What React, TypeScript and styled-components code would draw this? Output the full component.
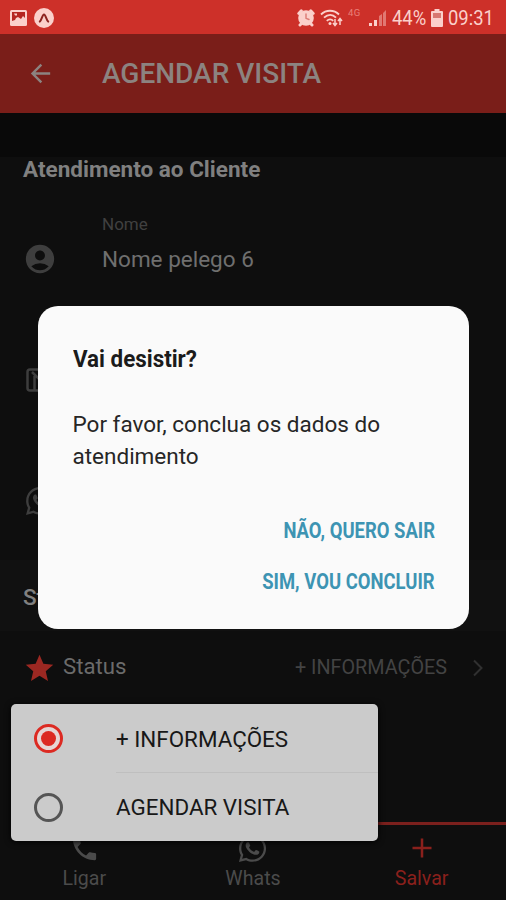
import React from 'react';
import styled, { createGlobalStyle } from 'styled-components';
import { MdAccountCircle, MdArrowBack, MdPhone, MdStar } from 'react-icons/md';
import { FaWhatsapp } from 'react-icons/fa';

const GlobalStyle = createGlobalStyle`
  *, *::before, *::after { box-sizing: border-box; }
  html, body { margin: 0; padding: 0; background: #0e0e0e; }
  svg { display: block; flex: none; }
`;

const Screen = styled.div`
  position: relative;
  display: flex;
  flex-direction: column;
  width: 506px;
  height: 900px;
  overflow: hidden;
  background: #0e0e0e;
  font-family: Roboto, 'Liberation Sans', sans-serif;
`;

const StatusBar = styled.div`
  flex: none;
  display: flex;
  align-items: center;
  justify-content: space-between;
  height: 34px;
  padding: 1px 13px 0 9px;
  background: #cd3029;
  color: #fbd0cb;
`;

const StatusGroup = styled.div<{ $gap: number }>`
  display: flex;
  align-items: center;
  gap: ${(p) => p.$gap}px;
`;

const StatusText = styled.span<{ $width: number }>`
  width: ${(p) => p.$width}px;
  font-size: 20.5px;
  line-height: 24px;
  white-space: nowrap;
  transform: scaleX(0.9);
  transform-origin: left center;
`;

const NetworkLabel = styled.span`
  align-self: flex-start;
  width: 16px;
  font-size: 9.5px;
  line-height: 14px;
  letter-spacing: 0.5px;
  color: #ea8078;
`;

const Header = styled.header`
  flex: none;
  display: flex;
  align-items: center;
  gap: 47px;
  height: 79px;
  padding: 0 26px;
  background: #7a1e19;
  color: #8c8380;
`;

const HeaderTitle = styled.h1`
  margin: 0;
  font-size: 28px;
  font-weight: 500;
  line-height: 36px;
`;

const Spacer = styled.div`
  flex: none;
  height: 44px;
  background: #090909;
`;

const SectionTitle = styled.h2<{ $height: number; $pad: number; $band?: boolean }>`
  flex: none;
  height: ${(p) => p.$height}px;
  margin: 0;
  padding: ${(p) => p.$pad}px 23px 0;
  background: ${(p) => (p.$band ? '#111111' : 'transparent')};
  color: #808080;
  font-size: 22.5px;
  font-weight: ${(p) => (p.$band ? 500 : 700)};
  line-height: 24px;
`;

const Field = styled.div`
  flex: none;
  display: flex;
  gap: 47px;
  height: 121px;
  padding: 15px 25px 0;
  color: #3e3e3e;
`;

const FieldIcon = styled.div`
  display: flex;
  align-items: center;
  justify-content: center;
  width: 30px;
  height: 30px;
  margin-top: 32px;
`;

const FieldText = styled.div`
  display: flex;
  flex-direction: column;
  gap: 10px;
`;

const FieldLabel = styled.span`
  color: #404040;
  font-size: 17px;
  line-height: 24px;
`;

const FieldValue = styled.span`
  color: #6f6f6f;
  font-size: 22.5px;
  line-height: 26px;
`;

const StatusRow = styled.div`
  flex: none;
  display: flex;
  align-items: center;
  height: 72px;
  padding: 2px 22px 0 23px;
  color: #6b6b6b;
`;

const RowName = styled.span`
  margin: -4px 0 0 7px;
  font-size: 22.2px;
  line-height: 30px;
`;

const RowValue = styled.span`
  margin: 0 25px 0 auto;
  color: #434343;
  font-size: 19.8px;
  line-height: 30px;
`;

const BottomBar = styled.nav`
  display: grid;
  grid-template-columns: repeat(3, 1fr);
  height: 78px;
  margin-top: auto;
`;

const Tab = styled.button<{ $active?: boolean }>`
  display: flex;
  flex-direction: column;
  align-items: center;
  gap: 3px;
  padding: 8px 0 0;
  border: 0;
  border-top: 3px solid ${(p) => (p.$active ? '#7b201d' : 'transparent')};
  background: transparent;
  color: ${(p) => (p.$active ? '#8a201c' : '#4b4b4b')};
  font: 400 19.6px/26px Roboto, 'Liberation Sans', sans-serif;
`;

const TabIcon = styled.span`
  display: flex;
  align-items: center;
  justify-content: center;
  height: 30px;
`;

const OptionMenu = styled.div`
  position: absolute;
  left: 11px;
  top: 704px;
  display: flex;
  flex-direction: column;
  width: 367px;
  height: 137px;
  border-radius: 5px;
  background: #cbcbcb;
  box-shadow: 0 1px 6px #000;
`;

const Option = styled.label`
  display: flex;
  align-items: center;
  gap: 53px;
  height: 68px;
  padding: 1px 0 0 23px;
  color: #181818;

  &:last-child {
    height: 67px;
  }
`;

const OptionText = styled.span`
  flex: 1;
  font-size: 22.4px;
  line-height: 30px;
`;

const OptionDivider = styled.div`
  height: 1px;
  margin-left: 105px;
  background: #bfbfbf;
`;

const Radio = styled.span<{ $on?: boolean }>`
  display: flex;
  align-items: center;
  justify-content: center;
  width: 29px;
  height: 29px;
  border: 3px solid ${(p) => (p.$on ? '#dc2a22' : '#555555')};
  border-radius: 50%;
  background: ${(p) => (p.$on ? '#e6d6d4' : 'transparent')};

  &::after {
    content: '';
    width: 15px;
    height: 15px;
    border-radius: 50%;
    background: ${(p) => (p.$on ? '#dc2a22' : 'transparent')};
  }
`;

const Dialog = styled.div`
  position: absolute;
  left: 38px;
  top: 306px;
  display: flex;
  flex-direction: column;
  width: 431px;
  height: 323px;
  padding: 37px 34px 0 34.5px;
  border-radius: 20px;
  background: #fafafa;
  color: #1b1b1b;
`;

const DialogTitle = styled.h3`
  margin: 0;
  font-size: 24.5px;
  font-weight: 700;
  line-height: 32px;
  transform: scaleX(0.913);
  transform-origin: left center;
`;

const DialogText = styled.p`
  margin: 33px 0 0;
  font-size: 22.5px;
  line-height: 32px;
  color: #262626;
`;

const DialogActions = styled.div`
  display: flex;
  flex-direction: column;
  align-items: flex-end;
  gap: 21px;
  margin-top: 44px;
`;

const DialogButton = styled.button`
  padding: 0;
  border: 0;
  background: transparent;
  color: #3d94b3;
  font: 700 21.8px/30px Roboto, 'Liberation Sans', sans-serif;
  white-space: nowrap;
  transform: scaleX(0.847);
  transform-origin: right center;
`;

const PictureIcon = () => (
  <svg width="19" height="18" viewBox="0 0 19 18">
    <rect x="1" y="1" width="17" height="16" rx="1.5" fill="#fbd0cb" />
    <path d="M3 3h13v6l-2-2-2 3-3-2-2 1-1 2-3 1z" fill="#b52520" />
    <path d="M5 4.500h3v2H6z" fill="#fbd0cb" />
  </svg>
);

const AppBadgeIcon = () => (
  <svg width="20" height="20" viewBox="0 0 20 20">
    <circle cx="10" cy="10" r="10" fill="#fbd0cb" />
    <path d="M5.800 13.600c1.800-1.600 2.600-7.200 4.200-7.200s2.400 5.600 4.200 7.200" fill="none" stroke="#8d2420" strokeWidth="2" strokeLinecap="round" />
  </svg>
);

const AlarmIcon = () => (
  <svg width="18" height="18" viewBox="0 0 18 18" fill="none" stroke="currentColor" strokeLinecap="round">
    <path d="M1.800 4.500l2.500-2.700M16.200 4.500l-2.500-2.700M3 16l2-2M15 16l-2-2" strokeWidth="3" />
    <circle cx="9" cy="9" r="7.800" fill="currentColor" stroke="none" />
    <path d="M9 5v4.300l3 1.200" stroke="#dc7a73" strokeWidth="1.400" />
  </svg>
);

const WifiIcon = () => (
  <svg width="23" height="18" viewBox="0 0 23 18" fill="none" stroke="currentColor" strokeWidth="1.800">
    <path d="M1 5.500C6 .500 14 .500 19 5.500M4 8.700c4-3.800 8.500-3.800 12 0M6.800 11.800c2-2 4.600-2 6.400 0" />
    <circle cx="10" cy="14.500" r="1.500" fill="currentColor" stroke="none" />
    <path d="M15 10v6M13 14l2 2.500 2-2.500M20 16v-6M18 12l2-2.500 2 2.500" strokeWidth="1.500" />
  </svg>
);

const SignalIcon = () => (
  <svg width="18" height="17" viewBox="0 0 18 17" fill="currentColor">
    <path d="M0 14h3v3H0zM5 11h3v6H5z" />
    <path d="M10 7l3-2v12h-3zM14 4l3-3v16h-3z" opacity=".45" />
  </svg>
);

const BatteryIcon = () => (
  <svg width="12" height="18" viewBox="0 0 12 18">
    <path d="M3.500 0h5v2H11a1 1 0 0 1 1 1v14a1 1 0 0 1-1 1H1a1 1 0 0 1-1-1V3a1 1 0 0 1 1-1h2.500z" fill="#fbd0cb" />
    <path d="M2 4h8v5H2z" fill="#d87770" />
  </svg>
);

const MapIcon = () => (
  <svg width="28" height="24" viewBox="0 0 28 24" fill="none" stroke="currentColor" strokeWidth="2.500">
    <rect x="1.500" y="1.500" width="25" height="21" rx="2.500" />
    <path d="M6 4l9 9 8-9M8.500 8v14" />
  </svg>
);

const ChevronIcon = () => (
  <svg width="12" height="18" viewBox="0 0 12 18" fill="none" stroke="#303030" strokeWidth="2">
    <path d="M2 1.500L9.500 9 2 16.500" />
  </svg>
);

const PlusIcon = () => (
  <svg width="28" height="28" viewBox="0 0 28 28" fill="none" stroke="currentColor" strokeWidth="2.500">
    <path d="M14 4.500v19M4.500 14h19" />
  </svg>
);

export default function App() {
  return (
    <Screen>
      <GlobalStyle />
      <StatusBar>
        <StatusGroup $gap={6}>
          <PictureIcon />
          <AppBadgeIcon />
        </StatusGroup>
        <StatusGroup $gap={5}>
          <AlarmIcon />
          <WifiIcon />
          <NetworkLabel>4G</NetworkLabel>
          <SignalIcon />
          <StatusText $width={34}>44%</StatusText>
          <BatteryIcon />
          <StatusText $width={45}>09:31</StatusText>
        </StatusGroup>
      </StatusBar>
      <Header>
        <MdArrowBack size={29} />
        <HeaderTitle>AGENDAR VISITA</HeaderTitle>
      </Header>
      <Spacer />
      <SectionTitle $height={40} $pad={0}>Atendimento ao Cliente</SectionTitle>
      <Field>
        <FieldIcon><MdAccountCircle size={34} /></FieldIcon>
        <FieldText>
          <FieldLabel>Nome</FieldLabel>
          <FieldValue>Nome pelego 6</FieldValue>
        </FieldText>
      </Field>
      <Field>
        <FieldIcon><MapIcon /></FieldIcon>
      </Field>
      <Field>
        <FieldIcon><FaWhatsapp size={32} /></FieldIcon>
      </Field>
      <SectionTitle $height={71} $pad={25} $band>Status</SectionTitle>
      <StatusRow>
        <MdStar size={33} color="#9c2822" />
        <RowName>Status</RowName>
        <RowValue>+ INFORMAÇÕES</RowValue>
        <ChevronIcon />
      </StatusRow>
      <BottomBar>
        <Tab><TabIcon><MdPhone size={31} /></TabIcon>Ligar</Tab>
        <Tab><TabIcon><FaWhatsapp size={31} /></TabIcon>Whats</Tab>
        <Tab $active><TabIcon><PlusIcon /></TabIcon>Salvar</Tab>
      </BottomBar>
      <OptionMenu>
        <Option>
          <Radio $on />
          <OptionText>+ INFORMAÇÕES</OptionText>
        </Option>
        <OptionDivider />
        <Option>
          <Radio />
          <OptionText>AGENDAR VISITA</OptionText>
        </Option>
      </OptionMenu>
      <Dialog>
        <DialogTitle>Vai desistir?</DialogTitle>
        <DialogText>Por favor, conclua os dados do atendimento</DialogText>
        <DialogActions>
          <DialogButton>NÃO, QUERO SAIR</DialogButton>
          <DialogButton>SIM, VOU CONCLUIR</DialogButton>
        </DialogActions>
      </Dialog>
    </Screen>
  );
}
